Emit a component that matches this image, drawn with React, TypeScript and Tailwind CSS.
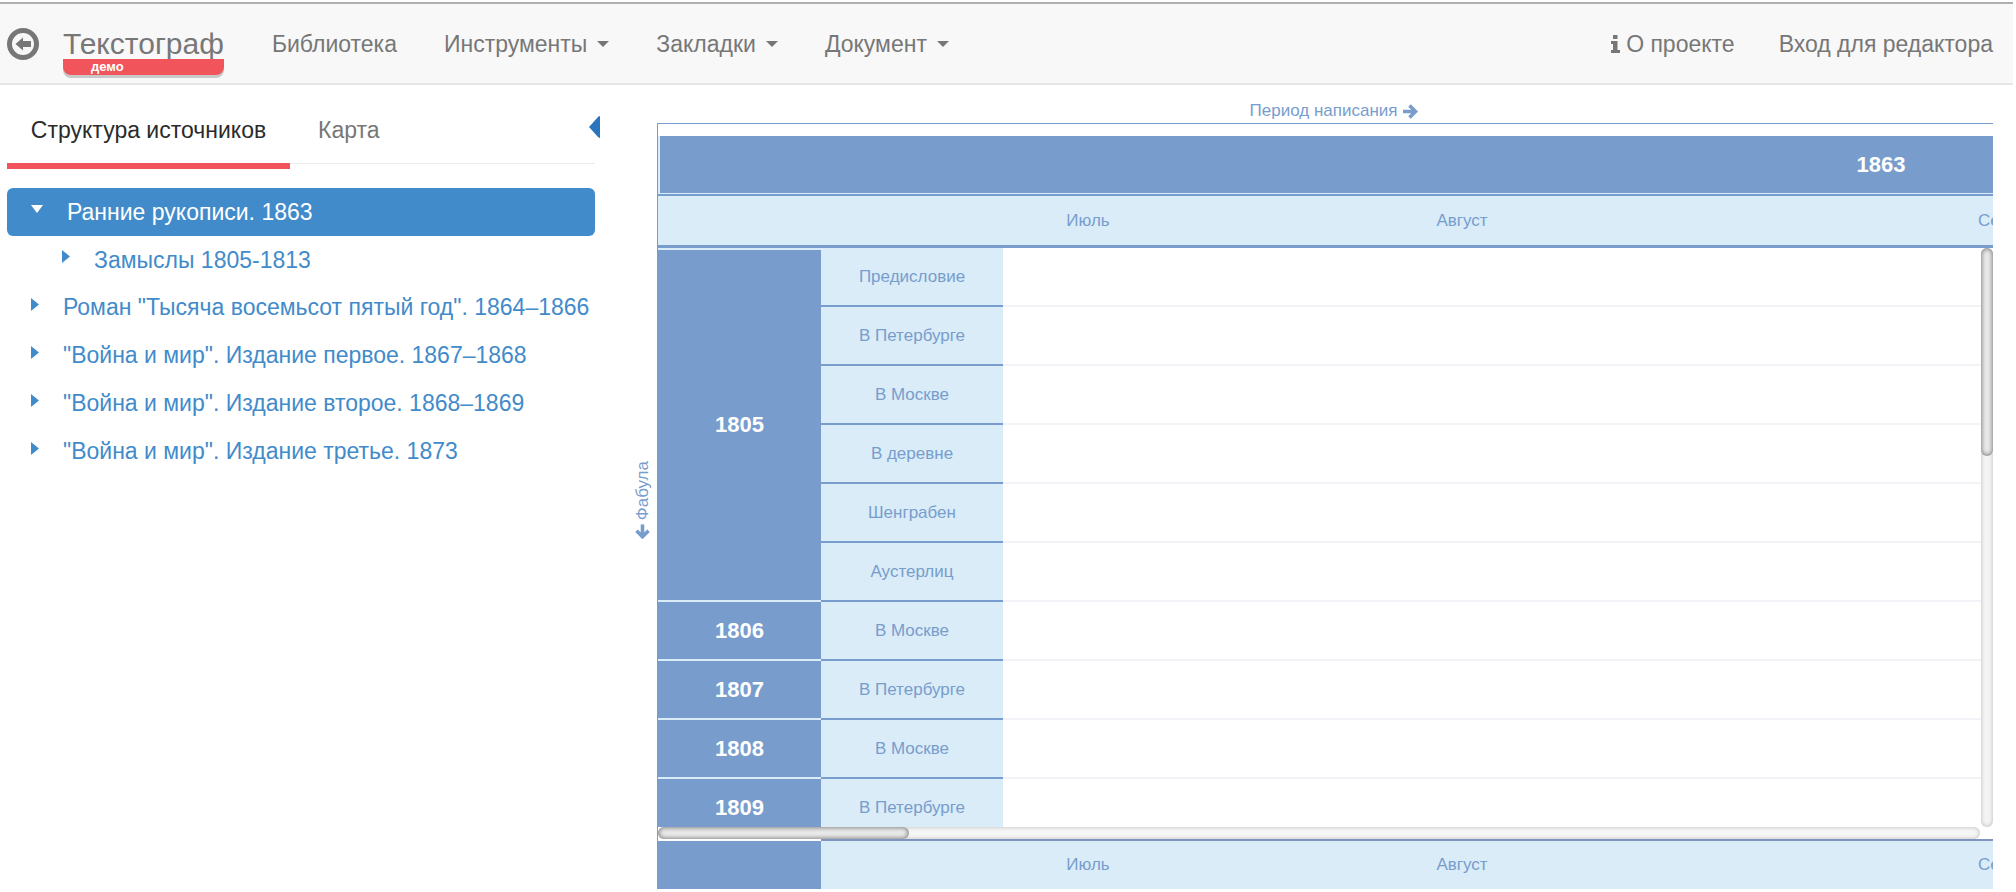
import React from "react";

const chapters: { year: string; places: string[] }[] = [
  { year: "1805", places: ["Предисловие", "В Петербурге", "В Москве", "В деревне", "Шенграбен", "Аустерлиц"] },
  { year: "1806", places: ["В Москве"] },
  { year: "1807", places: ["В Петербурге"] },
  { year: "1808", places: ["В Москве"] },
  { year: "1809", places: ["В Петербурге"] },
];

const sources = [
  'Роман "Тысяча восемьсот пятый год". 1864–1866',
  '"Война и мир". Издание первое. 1867–1868',
  '"Война и мир". Издание второе. 1868–1869',
  '"Война и мир". Издание третье. 1873',
];

function Caret() {
  return (
    <svg className="h-[6px] w-3 fill-current" viewBox="0 0 12 6" aria-hidden="true">
      <path d="M0 0h12L6 6z" />
    </svg>
  );
}

function Arrow({ className = "" }: { className?: string }) {
  return (
    <svg className={`h-[15px] w-[15px] ${className}`} viewBox="0 0 15 15" fill="none" stroke="currentColor" strokeWidth="3.6" aria-hidden="true">
      <path d="M0 7.5h12M6.500 1.500l6 6-6 6" />
    </svg>
  );
}

function Toggle() {
  return (
    <svg className="h-[13px] w-2 shrink-0 fill-current" viewBox="0 0 8 13" aria-hidden="true">
      <path d="M0 0l8 6.500L0 13z" />
    </svg>
  );
}

function Header() {
  return (
    <header className="mr-[3px] mt-[2px] flex h-[83px] shrink-0 items-center justify-between border-b-2 border-t-2 border-b-[#e7e7e7] border-t-[#b0b0b0] bg-[#f8f8f8] pl-[7px] pr-5 text-[23px] leading-[26px] text-[#777]">
      <div className="flex items-center">
        <button aria-label="Назад" className="mr-6">
          <svg className="h-8 w-8" viewBox="0 0 32 32" aria-hidden="true">
            <circle cx="16" cy="16" r="13.500" fill="none" stroke="currentColor" strokeWidth="5" />
            <path d="M8.500 16l7.500-6.500V13h8v6h-8v3.500z" fill="currentColor" />
          </svg>
        </button>
        <a href="#" className="relative mr-12 block text-[30px] leading-[30px]">
          Текстограф
          <span className="absolute left-0 top-full h-4 w-full rounded-b-lg bg-[#f2545b] pl-7 text-[13px] font-bold leading-4 text-white shadow-[0_3px_0_#c8c8c8]">
            демо
          </span>
        </a>
        <nav className="flex items-center gap-[47px]">
          <a href="#">Библиотека</a>
          {["Инструменты", "Закладки", "Документ"].map((label) => (
            <button key={label} className="flex items-center gap-[10px]">
              {label}
              <Caret />
            </button>
          ))}
        </nav>
      </div>
      <nav className="flex items-center gap-11">
        <a href="#" className="flex items-center gap-[6px]">
          <svg className="h-[18px] w-[9px] fill-current" viewBox="0 0 9 18" aria-hidden="true">
            <path d="M2 0h4.500v4H2zM0 6h6.500v9H9v3H0v-3h2V9H0z" />
          </svg>
          О проекте
        </a>
        <a href="#">Вход для редактора</a>
      </nav>
    </header>
  );
}

function Sidebar() {
  return (
    <aside className="w-[595px] shrink-0 pl-[7px] text-[23px] leading-[26px]">
      <div className="relative flex h-[79px] border-b border-[#ececec]" role="tablist">
        <button role="tab" aria-selected="true" className="relative w-[283px] pt-3 text-[#2b2b2b]">
          Структура источников
          <span className="absolute left-0 top-full h-[6px] w-full bg-[#f2545b]" />
        </button>
        <button role="tab" aria-selected="false" className="ml-7 pt-3 text-[#777]">
          Карта
        </button>
        <button aria-label="Свернуть панель" className="absolute -right-[5px] top-[31px] text-[#2a76bd]">
          <svg className="h-[22px] w-[11px] fill-current" viewBox="0 0 11 22" aria-hidden="true">
            <path d="M0 11L9 1q1-1 2-1v22q-1 0-2-1z" />
          </svg>
        </button>
      </div>
      <ul className="mt-6 text-[#428bca]">
        <li>
          <a href="#" className="flex h-12 items-center rounded-md bg-[#428bca] pl-6 text-white">
            <svg className="mb-[6px] mr-6 h-2 w-3 fill-current" viewBox="0 0 12 8" aria-hidden="true">
              <path d="M0 0h12L6 8z" />
            </svg>
            Ранние рукописи. 1863
          </a>
          <ul>
            <li>
              <a href="#" className="flex h-[47px] items-center pl-[55px]">
                <span className="mb-[6px] mr-6"><Toggle /></span>
                Замыслы 1805-1813
              </a>
            </li>
          </ul>
        </li>
        {sources.map((label) => (
          <li key={label}>
            <a href="#" className="flex h-12 items-center whitespace-nowrap pl-6">
              <span className="mb-[6px] mr-6"><Toggle /></span>
              {label}
            </a>
          </li>
        ))}
      </ul>
    </aside>
  );
}

function Months() {
  return (
    <div className="flex text-center">
      <span className="w-[168px] shrink-0">Июль</span>
      <span className="w-[580px] shrink-0">Август</span>
      <span className="w-[528px] shrink-0">Сентябрь</span>
    </div>
  );
}

function Timeline() {
  return (
    <section className="mr-[23px] flex min-w-0 flex-1 flex-col pt-[15px] text-[17px] leading-[22px] text-[#789dcc]">
      <h2 className="ml-20 flex items-center justify-center gap-[6px] pb-[1px] text-center">
        Период написания <Arrow />
      </h2>
      <div className="flex min-h-0 flex-1">
        <div className="flex w-[62px] shrink-0 items-center justify-end pb-3 pr-[3px]">
          <h2 className="flex rotate-180 items-center gap-1 [writing-mode:vertical-rl]">
            <Arrow className="-rotate-90" /> Фабула
          </h2>
        </div>
        <div className="flex min-w-0 flex-1 flex-col border-l border-t border-[#789dcc] pt-3">
          <div className="shrink-0 overflow-hidden border-b border-l-2 border-[#d9ecf8]">
            <div className="h-[57px] w-[2442px] bg-[#789dcc] text-center text-[22px] font-bold leading-[57px] text-white">
              1863
            </div>
          </div>
          <div className="flex h-[54px] shrink-0 items-center overflow-hidden border-b-[3px] border-t-2 border-[#789dcc] bg-[#d9ecf8] pl-[346px]">
            <Months />
          </div>
          <div className="flex min-h-0 flex-1">
            <div className="min-w-0 flex-1 overflow-hidden">
              <table className="w-full table-fixed border-separate border-spacing-0">
                <colgroup>
                  <col className="w-[163px]" />
                  <col className="w-[182px]" />
                  <col />
                </colgroup>
                <tbody>
                  {chapters.map(({ year, places }) =>
                    places.map((place, i) => (
                      <tr key={year + place} className="h-[59px]">
                        {i === 0 && (
                          <th
                            rowSpan={places.length}
                            scope="rowgroup"
                            className="border-b-2 border-[#d9ecf8] bg-[#789dcc] text-[22px] font-bold text-white first:in-[tr:first-child]:border-t-2"
                          >
                            {year}
                          </th>
                        )}
                        <th scope="row" className="border-b-2 border-[#789dcc] bg-[#d9ecf8] font-normal">
                          {place}
                        </th>
                        <td className="border-b-2 border-[#f2f3f7]" />
                      </tr>
                    )),
                  )}
                </tbody>
              </table>
            </div>
            <div className="w-3 shrink-0 rounded-full bg-[#f4f4f4] shadow-[inset_0_0_4px_#b8b8b8]">
              <div className="h-[36%] rounded-full bg-[#e9e9e9] shadow-[inset_0_0_4px_1px_#858585]" />
            </div>
          </div>
          <div className="mr-[13px] h-3 shrink-0 rounded-full bg-[#f6f6f6] shadow-[inset_0_0_4px_#b8b8b8]">
            <div className="h-3 w-[19%] rounded-full bg-[#e9e9e9] shadow-[inset_0_0_4px_1px_#858585]" />
          </div>
          <div className="flex h-[50px] shrink-0 overflow-hidden">
            <div className="w-[163px] shrink-0 border-t-2 border-white bg-[#789dcc]" />
            <div className="flex min-w-0 flex-1 items-center overflow-hidden border-t-2 border-[#7f94be] bg-[#d9ecf8] pl-[183px]">
              <Months />
            </div>
          </div>
        </div>
      </div>
    </section>
  );
}

export default function App() {
  return (
    <div className="flex h-screen flex-col overflow-hidden bg-white pb-[3px] font-['Liberation_Sans',Arial,sans-serif]">
      <Header />
      <main className="flex min-h-0 flex-1">
        <Sidebar />
        <Timeline />
      </main>
    </div>
  );
}
